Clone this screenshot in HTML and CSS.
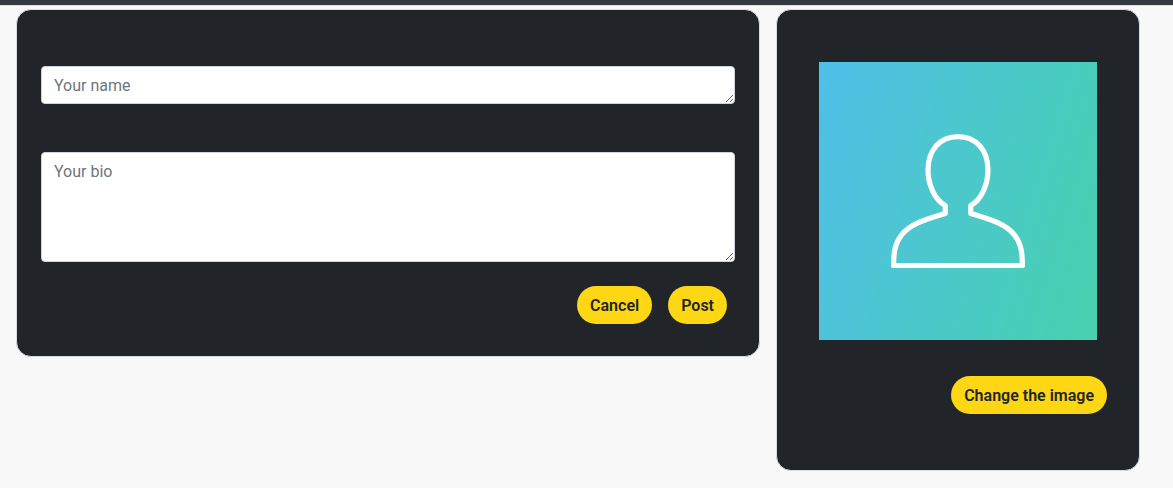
FILE: index.html
```html
<!DOCTYPE html>
<html lang="en">
<head>
<meta charset="utf-8">
<meta name="viewport" content="width=device-width, initial-scale=1">
<title>Profile</title>
<link rel="stylesheet" href="styles.css">
</head>
<body>
<header class="topbar"></header>
<main class="layout">
  <form class="card profile-form">
    <textarea class="field field-name" aria-label="Your name" placeholder="Your name"></textarea>
    <textarea class="field field-bio" aria-label="Your bio" placeholder="Your bio"></textarea>
    <div class="actions">
      <button class="btn" type="button">Cancel</button>
      <button class="btn" type="submit">Post</button>
    </div>
  </form>
  <section class="card photo-card">
    <div class="avatar">
      <svg class="avatar-icon" viewBox="0 0 278 278" role="img" aria-label="Profile picture" fill="none" stroke="#fff" stroke-width="5.2" stroke-linejoin="round">
        <path d="M126.300 143.500C116 138 109 123 109 108C109 88 121 74.600 139 74.600C157 74.600 169 88 169 108C169 123 162 138 151.700 143.500V151.500C173 158 187 162 195.500 173C202.500 182 203.400 192 203.400 203.500H74.600C74.600 192 75.500 182 82.500 173C91 162 105 158 126.300 151.500Z"/>
      </svg>
    </div>
    <div class="actions">
      <button class="btn" type="button">Change the image</button>
    </div>
  </section>
</main>
</body>
</html>
```
FILE: styles.css
```css
* {
  box-sizing: border-box;
}

body {
  margin: 0;
  background: #f8f8f8;
  font-family: Roboto, "Liberation Sans", sans-serif;
  font-size: 16px;
  line-height: 24px;
}

.topbar {
  height: 6px;
  background: #353942;
  border-bottom: 1px solid #dedee0;
}

.layout {
  display: grid;
  grid-template-columns: 744fr 364fr;
  align-items: start;
  gap: 16px;
  padding: 3px 33px 16px 16px;
}

.card {
  display: flex;
  flex-direction: column;
  min-width: 0;
  background: #212529;
  border: 1px solid #d9dadd;
  border-radius: 15px;
}

.profile-form {
  padding: 56px 24px 32px;
}

.field {
  display: block;
  width: 100%;
  padding: 7px 12px 5px;
  border: 1px solid #ced4da;
  border-radius: 4px;
  background: #fff;
  color: #212529;
  font: inherit;
  resize: vertical;
}

.field::placeholder {
  color: #6c757d;
  opacity: 1;
}

.field-name {
  height: 38px;
  margin-bottom: 48px;
}

.field-bio {
  height: 110px;
  margin-bottom: 24px;
}

.actions {
  display: flex;
  justify-content: flex-end;
  gap: 16px;
  padding-right: 8px;
}

.btn {
  padding: 8px 13px 6px;
  border: 0;
  border-radius: 19px;
  background: #fdd614;
  color: #212529;
  font: inherit;
  font-weight: 600;
  cursor: pointer;
}

.photo-card {
  padding: 52px 24px 56px;
}

.avatar {
  aspect-ratio: 1;
  margin: 0 18px 36px;
  background: linear-gradient(107deg, #4fbfe8, #48d1ae);
}

.avatar-icon {
  display: block;
  width: 100%;
}
```
